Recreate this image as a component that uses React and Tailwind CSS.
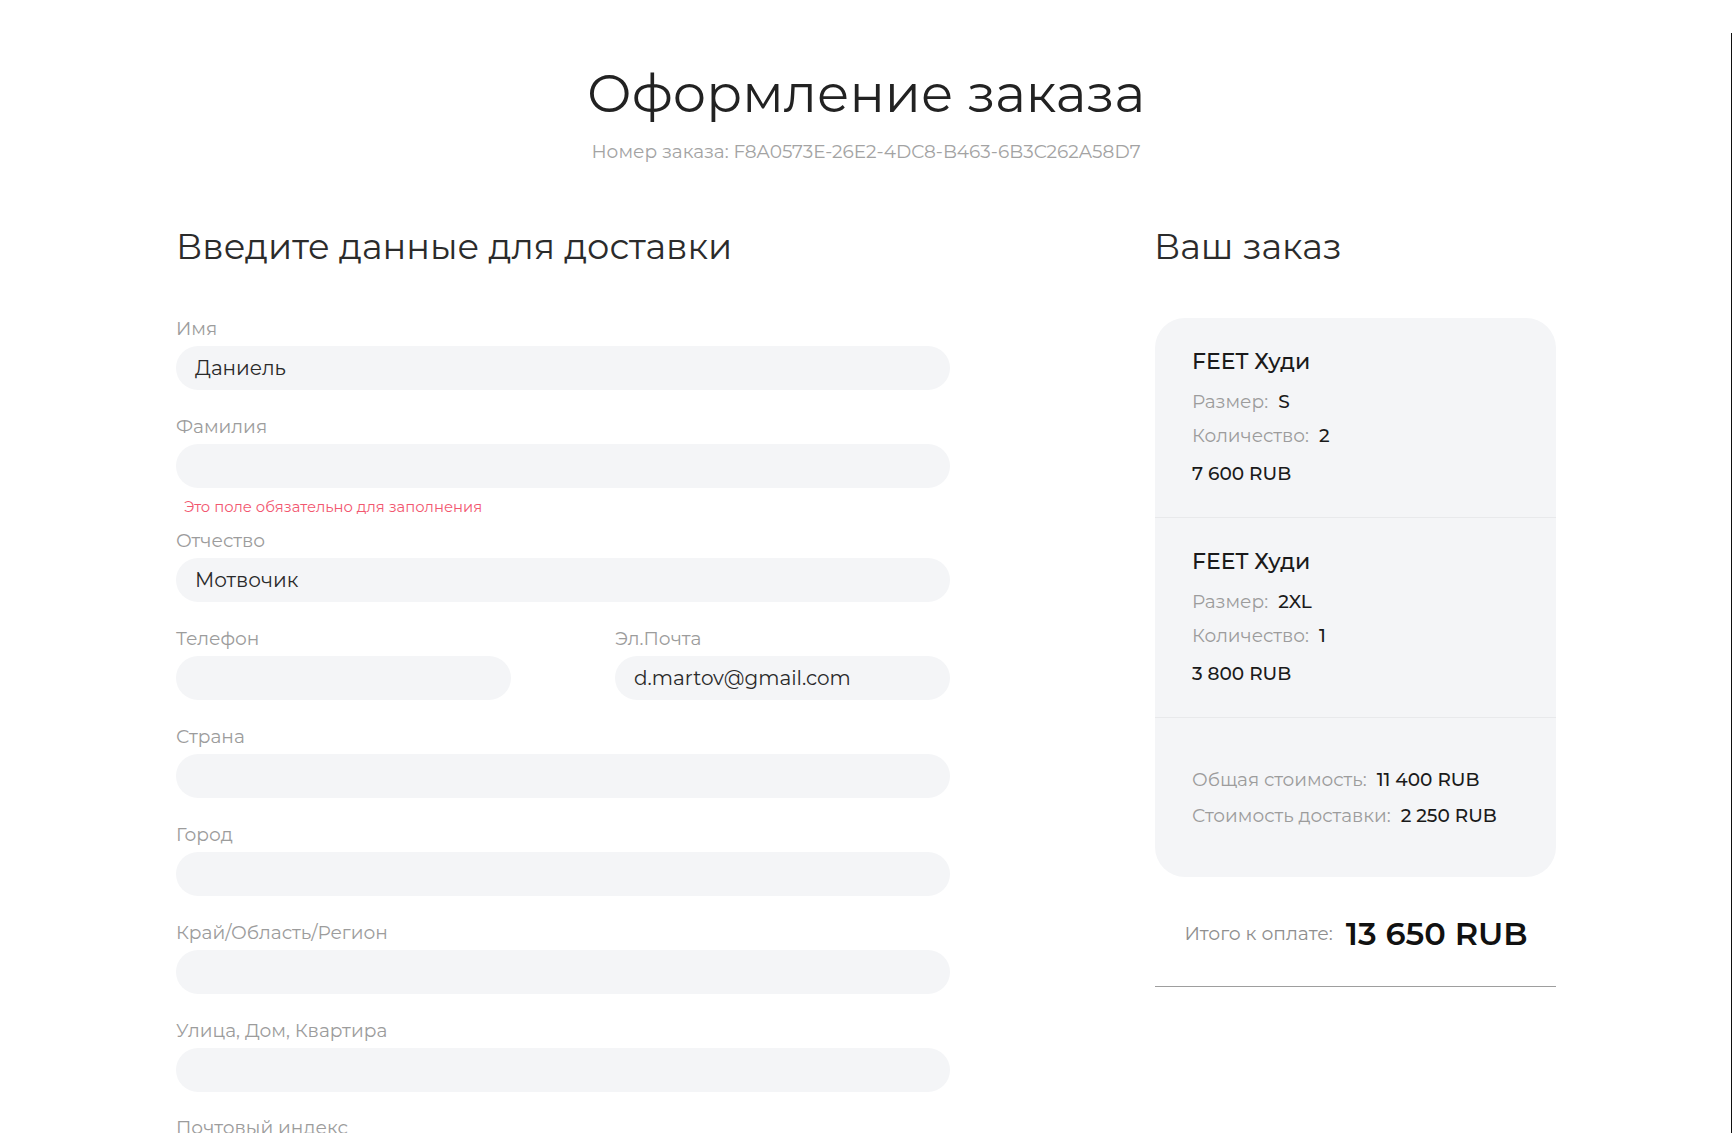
import React from "react";

const font = { fontFamily: "'Montserrat', 'Inter', 'Noto Sans', sans-serif" };

function Field({ label, value, error, className = "" }) {
  return (
    <div className={className}>
      <div className="h-[22px] text-[18.6px] leading-[22px] text-[#9c9c9c] mb-[6px] whitespace-nowrap">{label}</div>
      <div className="h-[44px] rounded-full bg-[#f4f5f7] flex items-center px-[19px] text-[20px] text-[#2a2a2a]">
        {value}
      </div>
      {error && (
        <div className="mt-[10px] pl-[8px] text-[14.8px] leading-[18px] text-[#f2576f]">{error}</div>
      )}
    </div>
  );
}

function Item({ title, size, qty, price }) {
  return (
    <div className="px-[37px] pt-[30px] pb-[31px] border-b border-[#e8e9eb]">
      <div className="text-[22px] leading-[28px] font-medium text-[#1a1a1a]">{title}</div>
      <div className="mt-[14px] flex flex-col gap-[10px] text-[18.5px] leading-[24px]">
        <div>
          <span className="text-[#9c9c9c]">Размер:</span>
          <span className="ml-[10px] text-[#1a1a1a] font-medium">{size}</span>
        </div>
        <div>
          <span className="text-[#9c9c9c]">Количество:</span>
          <span className="ml-[10px] text-[#1a1a1a] font-medium">{qty}</span>
        </div>
      </div>
      <div className="mt-[14px] text-[18.5px] leading-[24px] text-[#1a1a1a] font-medium">{price}</div>
    </div>
  );
}

export default function App() {
  return (
    <div className="relative h-[1133px] bg-white overflow-hidden" style={font}>
      <div className="absolute right-0 top-[33px] bottom-0 w-px bg-[#111]" />
      <div className="pt-[61px] flex flex-col items-center">
        <h1 className="text-[52.5px] leading-[64px] font-normal text-[#222]">Оформление заказа</h1>
        <div className="mt-[15px] text-[18.5px] leading-[24px] text-[#a3a3a3]">
          Номер заказа: F8A0573E-26E2-4DC8-B463-6B3C262A58D7
        </div>
      </div>

      <div className="mx-auto w-[1380px] mt-[63px] flex justify-between items-start">
        <div className="w-[774px]">
          <h2 className="text-[35.2px] leading-[40px] font-normal text-[#2b2b2b]">Введите данные для доставки</h2>
          <div className="mt-[51px] flex flex-col">
            <Field label="Имя" value="Даниель" className="mb-[26px]" />
            <Field label="Фамилия" value="" error="Это поле обязательно для заполнения" className="mb-[14px]" />
            <Field label="Отчество" value="Мотвочик" className="mb-[26px]" />
            <div className="grid grid-cols-2 gap-[104px] mb-[26px]">
              <Field label="Телефон" value="" />
              <Field label="Эл.Почта" value="d.martov@gmail.com" />
            </div>
            <Field label="Страна" value="" className="mb-[26px]" />
            <Field label="Город" value="" className="mb-[26px]" />
            <Field label="Край/Область/Регион" value="" className="mb-[26px]" />
            <Field label="Улица, Дом, Квартира" value="" className="mb-[25px]" />
            <Field label="Почтовый индекс" value="" className="mb-[26px]" />
          </div>
        </div>

        <div className="w-[400px]">
          <h2 className="text-[35.2px] leading-[40px] font-normal text-[#2b2b2b] -ml-[2px]">Ваш заказ</h2>
          <div className="mt-[51px] -ml-[1px] rounded-[30px] bg-[#f4f5f7] overflow-hidden">
            <Item title="FEET Худи" size="S" qty="2" price="7 600 RUB" />
            <Item title="FEET Худи" size="2XL" qty="1" price="3 800 RUB" />
            <div className="px-[37px] pt-[50px] pb-[49px] flex flex-col gap-[12px] text-[18.5px] leading-[24px]">
              <div>
                <span className="text-[#9c9c9c]">Общая стоимость:</span>
                <span className="ml-[10px] text-[#1a1a1a] font-medium">11 400 RUB</span>
              </div>
              <div>
                <span className="text-[#9c9c9c]">Стоимость доставки:</span>
                <span className="ml-[10px] text-[#1a1a1a] font-medium">2 250 RUB</span>
              </div>
            </div>
          </div>
          <div className="mt-[37px] flex items-center justify-center gap-[13px]">
            <span className="text-[18.8px] text-[#8f8f8f]">Итого к оплате:</span>
            <span className="text-[32px] leading-[40px] font-semibold text-[#111]">13 650 RUB</span>
          </div>
          <div className="mt-[32px] -ml-[1px] border-t border-[#9e9e9e]" />
        </div>
      </div>
    </div>
  );
}
